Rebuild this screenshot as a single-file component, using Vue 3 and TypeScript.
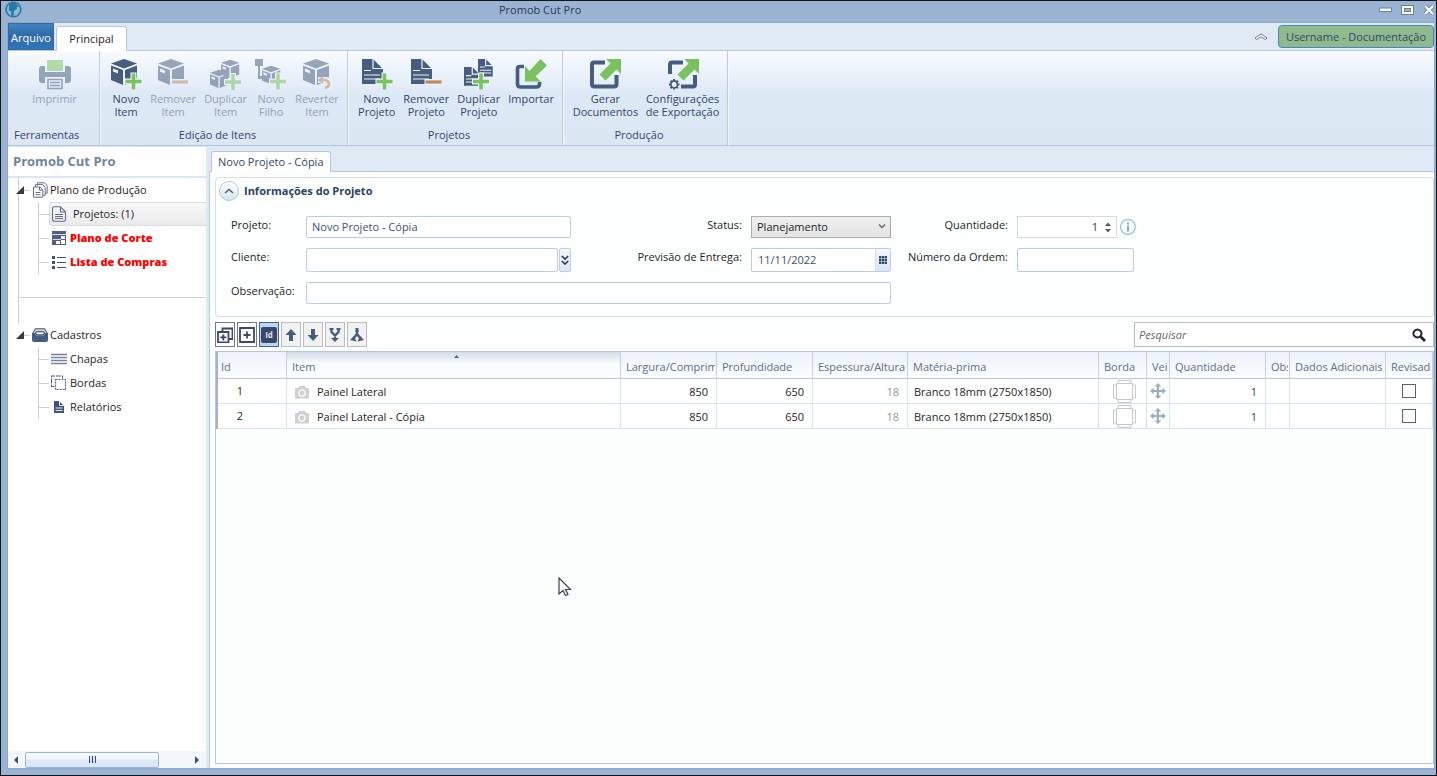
<script setup lang="ts">
import { h, ref } from 'vue'

interface Shape {
  d: string
  fill?: string
  stroke?: string
  w?: number
  dash?: string
}
interface RibbonButton {
  icon: string
  lines: string[]
  disabled?: boolean
}
interface RibbonGroup {
  name: string
  cls: string
  buttons: RibbonButton[]
}

const NAVY = '#465d7e'
const GREEN = '#79c25f'
const TAN = '#bf8a60'
const PALE = '#eef3fa'

const cube = (x: number, y: number, s: number): Shape[] => {
  const p = (a: number, b: number) => `${(x + a * s).toFixed(1)} ${(y + b * s).toFixed(1)}`
  return [
    {
      d: `M${p(13, 1)}L${p(26, 5.5)}L${p(13, 10.5)}L${p(0, 5.5)}ZM${p(0, 7.5)}L${p(12, 12)}V${(y + 27 * s).toFixed(1)}L${p(0, 22)}ZM${p(14, 12)}L${p(26, 7.5)}V${(y + 22 * s).toFixed(1)}L${p(14, 27)}Z`,
      fill: NAVY,
    },
    { d: `M${p(2, 10.5)}L${p(7, 12.5)}V${(y + 15.5 * s).toFixed(1)}L${p(2, 13.5)}Z`, fill: PALE },
  ]
}
const plus = (x: number, y: number): Shape[] => [
  { d: `M${x - 9} ${y}h18M${x} ${y - 9}v18`, stroke: PALE, w: 6 },
  { d: `M${x - 8} ${y}h16M${x} ${y - 8}v16`, stroke: GREEN, w: 3.6 },
]
const minus = (x: number, y: number): Shape[] => [
  { d: `M${x - 9} ${y}h18`, stroke: PALE, w: 6 },
  { d: `M${x - 8} ${y}h16`, stroke: TAN, w: 3.2 },
]
const page = (x: number, y: number, s: number): Shape[] => [
  { d: `M${x} ${y}h${11 * s}l${10 * s} ${10 * s}v${15 * s}h${-21 * s}z`, fill: NAVY },
  { d: `M${x + 11 * s} ${y}v${9.5 * s}h${10 * s}`, stroke: PALE, w: 1.2 },
  {
    d: `M${x + 2} ${y + 11.5 * s}h${7 * s}M${x + 2} ${y + 16 * s}h${16 * s}M${x + 2} ${y + 20 * s}h${16 * s}`,
    stroke: PALE,
    w: 1.1,
  },
]
const outArrow: Shape = { d: 'M17 1h15v15l-4.5-4.5L16.5 22.5l-6-6L21.5 5.5z', fill: GREEN }

const icons: Record<string, Shape[]> = {
  print: [
    { d: 'M8 2h16v11H8z', fill: GREEN },
    { d: 'M3 8h3v6h20V8h3q3 0 3 3v11q0 3-3 3h-3v-6H6v6H3q-3 0-3-3V11q0-3 3-3z', fill: NAVY },
    { d: 'M9 21.5h14v9H9zM11 24.5h10M11 27.5h10', stroke: NAVY, w: 1.5 },
  ],
  itemNew: [...cube(1, 0, 1), ...plus(23.5, 23.5)],
  itemRemove: [...cube(1, 0, 1), ...minus(23, 24)],
  itemDuplicate: [...cube(11, 1, 0.7), ...cube(0, 11, 0.7), ...plus(23, 24)],
  itemChild: [
    { d: 'M0 1h8v7H0zM3 8h2v10h4v3H3z', fill: NAVY },
    ...cube(7, 7, 0.7),
    ...plus(23, 23.5),
  ],
  itemRevert: [
    ...cube(2, 0, 1),
    { d: 'M17 22h7q5 0 5 4t-4 5', stroke: PALE, w: 6 },
    { d: 'M20 22h4q4 1 4 4t-4 4', stroke: TAN, w: 2.8 },
    { d: 'M16 22l6-4v8z', fill: TAN },
  ],
  projectNew: [...page(1, 1, 1), ...plus(23.5, 23.5)],
  projectRemove: [...page(1, 1, 1), ...minus(23.5, 24)],
  projectDuplicate: [...page(15, 1, 0.7), ...page(1, 9, 0.75), ...plus(18, 23.5)],
  import: [
    { d: 'M9 8.5H5q-2.5 0-2.5 2.5v15q0 3 3 3h16q3 0 3-3v-2', stroke: NAVY, w: 3.6 },
    { d: 'M10 8l4.5 5L25.5 1l6.5 6.5L20.5 18.5l5.5 5H10z', fill: GREEN },
  ],
  generate: [
    { d: 'M16 4.5H5q-2 0-2 2v19.5q0 2.5 2.5 2.5H25q2.5 0 2.5-2.5V17', stroke: NAVY, w: 4 },
    outArrow,
  ],
  exportConfig: [
    { d: 'M16 4.5H5q-2 0-2 2V16M14 28.5h12q2 0 2-2V17', stroke: NAVY, w: 4 },
    outArrow,
    { d: 'M7 21v10.5M2 26.5h10.5M3.5 22.7l7.5 7.5M3.5 30.2l7.5-7.5', stroke: NAVY, w: 2 },
    { d: 'M7.2 23a3.4 3.4 0 1 1-.1 0z', fill: PALE, stroke: NAVY, w: 1.8 },
  ],
  stack: [
    { d: 'M5.5 3.5V.8h7l2.7 3v7.4h-2M3.5 5V2.6h7l2.7 3v7.7h-2', stroke: '#61708f', w: 1 },
    { d: 'M1.5 5h6.3l3 3v7.2H1.500zM7.5 5v3.2h3M3.5 10.5h5M3.5 12.7h5', stroke: '#61708f', w: 1, fill: '#fff' },
  ],
  sheet: [
    { d: 'M3 .8h6.5L14.5 6v7.5q0 1.700-1.700 1.700H3.500q-2 0-2-2V2.500Q1.500.8 3 .8zM9.500 1v5h5M4 8.500h8M4 10.500h8M4 12.500h8', stroke: '#61708f', w: 1.1 },
  ],
  cutPlan: [
    { d: 'M1 1h14v14H1z', fill: '#50607d' },
    { d: 'M1 4.500h14', stroke: '#d7dce6', w: 1 },
    { d: 'M2 9.500h8', stroke: '#d7dce6', w: 1 },
    { d: 'M10 6h4v3h-4zM5 11h4v3H5zM10 10h4v4h-4z', fill: '#fff' },
  ],
  list: [
    { d: 'M1 2h3v3H1zM1 7h3v3H1zM1 12h3v3H1z', fill: '#3f5272' },
    { d: 'M6 3.500h9M6 8.500h9M6 13.500h9', stroke: '#3f5272', w: 1.2 },
  ],
  tray: [
    { d: 'M0 6h3l1 2.500h8L13 6h3v7q0 2-2 2H2q-2 0-2-2z', fill: NAVY },
    { d: 'M1 6l2.500-4.200h9L15 6M3 6.500l2-2h6l2 2-2 1.500H5z', stroke: NAVY, w: 1.3 },
  ],
  boards: [{ d: 'M0 3.500h16M0 6.500h16M0 9.500h16M0 12.500h16', stroke: '#7586a4', w: 1.4 }],
  edges: [
    { d: 'M3.500 11.500h-3V1h11v2.500', stroke: '#50607d', w: 1.1, dash: '5 1' },
    { d: 'M4.500 4.500h10v10h-10z', stroke: '#50607d', w: 1.2, dash: '2 1' },
  ],
  report: [
    { d: 'M3 2h5l5 5v7H3z', fill: '#3c5377' },
    { d: 'M8.500 2v4.500H13M4.500 9h7M4.500 11.500h7', stroke: '#e8edf5', w: 1 },
  ],
  expandAll: [
    { d: 'M5.500 5V1.500h10V12H12', stroke: '#3b4a68', w: 1.8 },
    { d: 'M1 5h10.500v10.500H1zM6.300 7.500v6M3.300 10.400h6', stroke: '#3b4a68', w: 1.8 },
  ],
  addBox: [{ d: 'M1 1h14v14H1zM8 4.500v7M4.500 8h7', stroke: '#3b4a68', w: 1.8 }],
  up: [{ d: 'M8 2l5.500 6H10v6H6V8H2.500z', fill: NAVY }],
  down: [{ d: 'M8 14l5.500-6H10V2H6v6H2.500z', fill: NAVY }],
  merge: [
    { d: 'M4.500 2v3L8 8.500 11.500 5V2M8 8v4', stroke: NAVY, w: 2.4 },
    { d: 'M2.500 1h4v2h-4zM9.500 1h4v2h-4zM4 11h8l-4 4z', fill: NAVY },
  ],
  split: [
    { d: 'M8 3v4l-4 5M8 7l4 5', stroke: NAVY, w: 2.4 },
    { d: 'M6.500 1h3v4h-3zM1 13l4-4 2.500 5.500zM15 13l-4-4-2.500 5.500z', fill: NAVY },
  ],
  camera: [
    { d: 'M1 4q0-1 1-1h2l1.200-2h5.600L12 3h2q1 0 1 1v8.500q0 1-1 1H2q-1 0-1-1z', fill: '#d0d0d0' },
    { d: 'M8 4.800a3.200 3.200 0 1 1-.1 0z', stroke: '#fff', w: 1.3 },
  ],
  banding: [
    { d: 'M5 .5h13v3H5zM5 19.500h13v3H5zM.5 5h3v13h-3zM19.500 5h3v13h-3zM3.500 3.500h16v16h-16z', stroke: '#c6c9c9', w: 1 },
  ],
  move: [
    { d: 'M8 2v12M2 8h12', stroke: '#9badc5', w: 2 },
    { d: 'M8 0l3.300 3.600H4.700zM8 16l3.300-3.600H4.700zM0 8l3.600-3.300v6.600zM16 8l-3.600-3.300v6.600z', fill: '#9badc5' },
  ],
  search: [
    { d: 'M5.500 1.500a4 4 0 1 1-.1 0z', stroke: '#2b2633', w: 2 },
    { d: 'M8.500 8.500l4.500 4.500', stroke: '#2b2633', w: 2.8 },
  ],
  info: [
    { d: 'M8 .7a7.300 7.300 0 1 1-.1 0z', stroke: '#8cc4ea', w: 1.2 },
    { d: 'M7 6.500h2v6H7zM7 3.500h2v2H7z', fill: '#6fb3e6' },
  ],
  calendar: [
    { d: 'M0 0h8v8H0z', fill: '#34496c' },
    { d: 'M0 2.500h8M0 5.500h8M2.500 0v8M5.500 0v8', stroke: '#c9d7ea', w: 0.6 },
  ],
  chevrons: [{ d: 'M.8 1l3.200 3 3.200-3M.8 6l3.200 3 3.200-3', stroke: '#2d3b52', w: 1.7 }],
  chevronUp: [{ d: 'M1 6l4-3.500L9 6', stroke: '#50607d', w: 1.6 }],
  chevronDown: [{ d: 'M1 2.500l3 3 3-3', stroke: '#666b75', w: 1.5 }],
  caretUp: [{ d: 'M0 4l3-3.500L6 4z', fill: '#55596a' }],
  caretDown: [{ d: 'M0 0l3 3.500L6 0z', fill: '#55596a' }],
  sorted: [{ d: 'M0 3l2.500-3L5 3z', fill: '#4a6285' }],
  collapse: [{ d: 'M1 5l6-4 6 4-1.500 1.500L7 3.800 2.500 6.500z', fill: '#fff', stroke: '#777c88', w: 1 }],
  minimize: [{ d: 'M.5 1h12v3.500H.5z', fill: '#fff', stroke: '#6e7f98', w: 1 }],
  maximize: [{ d: 'M2 2h9v6H2z', stroke: '#6e7f98', w: 4 }, { d: 'M2 2h9v6H2z', stroke: '#fff', w: 2 }],
  close: [{ d: 'M2 1l8 8M10 1l-8 8', stroke: '#6e7f98', w: 4 }, { d: 'M2 1l8 8M10 1l-8 8', stroke: '#fff', w: 2.4 }],
  left: [{ d: 'M4 0v8L0 4z', fill: '#3d5274' }],
  right: [{ d: 'M0 0v8l4-4z', fill: '#3d5274' }],
  grip: [{ d: 'M.5 0v7M3.500 0v7M6.500 0v7', stroke: '#3d5274', w: 1.2 }],
  opened: [{ d: 'M8 0v8H0z', fill: '#3a3a3a' }],
  logo: [
    { d: 'M8.500 1.200a7.300 7.300 0 1 1-.1 0z', fill: '#8db6d4', stroke: '#2878a8', w: 1.6 },
    { d: 'M4 3.500q3-2.500 6.500-1.500L14 5.500l-2.500 1 .5 1.500-3 1.500-.5 6q-2-.2-2.500-2l.5-3-2.500-1z', fill: '#2878a8' },
  ],
  pointer: [{ d: 'M1 1v16l4-3.500 2.500 5 2.500-1-2.500-5h5z', fill: '#fff', stroke: '#3b3f55', w: 1.2 }],
}

const Icon = (props: { name: string; w: number; h: number }) =>
  h(
    'svg',
    { width: props.w, height: props.h, viewBox: `0 0 ${props.w} ${props.h}`, 'aria-hidden': 'true' },
    icons[props.name].map((s) =>
      h('path', {
        d: s.d,
        fill: s.fill ?? 'none',
        stroke: s.stroke ?? 'none',
        'stroke-width': s.w ?? 0,
        'stroke-dasharray': s.dash,
      }),
    ),
  )
Icon.props = ['name', 'w', 'h']

const groups: RibbonGroup[] = [
  { name: 'Ferramentas', cls: 'g-tools', buttons: [{ icon: 'print', lines: ['Imprimir'], disabled: true }] },
  {
    name: 'Edição de Itens',
    cls: 'g-items',
    buttons: [
      { icon: 'itemNew', lines: ['Novo', 'Item'] },
      { icon: 'itemRemove', lines: ['Remover', 'Item'], disabled: true },
      { icon: 'itemDuplicate', lines: ['Duplicar', 'Item'], disabled: true },
      { icon: 'itemChild', lines: ['Novo', 'Filho'], disabled: true },
      { icon: 'itemRevert', lines: ['Reverter', 'Item'], disabled: true },
    ],
  },
  {
    name: 'Projetos',
    cls: 'g-projects',
    buttons: [
      { icon: 'projectNew', lines: ['Novo', 'Projeto'] },
      { icon: 'projectRemove', lines: ['Remover', 'Projeto'] },
      { icon: 'projectDuplicate', lines: ['Duplicar', 'Projeto'] },
      { icon: 'import', lines: ['Importar'] },
    ],
  },
  {
    name: 'Produção',
    cls: 'g-production',
    buttons: [
      { icon: 'generate', lines: ['Gerar', 'Documentos'] },
      { icon: 'exportConfig', lines: ['Configurações', 'de Exportação'] },
    ],
  },
]

const tree = [
  {
    label: 'Plano de Produção',
    icon: 'stack',
    children: [
      { label: 'Projetos: (1)', icon: 'sheet', cls: 'selected' },
      { label: 'Plano de Corte', icon: 'cutPlan', cls: 'alert' },
      { label: 'Lista de Compras', icon: 'list', cls: 'alert' },
    ],
  },
  {
    label: 'Cadastros',
    icon: 'tray',
    children: [
      { label: 'Chapas', icon: 'boards', cls: '' },
      { label: 'Bordas', icon: 'edges', cls: '' },
      { label: 'Relatórios', icon: 'report', cls: '' },
    ],
  },
]

const tools = [
  { icon: 'expandAll', title: 'Expandir todos', cls: 'outlined' },
  { icon: 'addBox', title: 'Adicionar', cls: 'outlined' },
  { icon: '', title: 'Id', cls: 'active' },
  { icon: 'up', title: 'Mover para cima', cls: '' },
  { icon: 'down', title: 'Mover para baixo', cls: '' },
  { icon: 'merge', title: 'Agrupar', cls: '' },
  { icon: 'split', title: 'Separar', cls: '' },
]

const columns = [
  { label: 'Id', cls: 'c-id' },
  { label: 'Item', cls: 'c-item' },
  { label: 'Largura/Comprimento', cls: 'c-wide' },
  { label: 'Profundidade', cls: 'c-wide' },
  { label: 'Espessura/Altura', cls: 'c-thick' },
  { label: 'Matéria-prima', cls: 'c-material' },
  { label: 'Borda', cls: 'c-edge' },
  { label: 'Veio', cls: 'c-grain' },
  { label: 'Quantidade', cls: 'c-wide' },
  { label: 'Obs', cls: 'c-note' },
  { label: 'Dados Adicionais', cls: 'c-wide' },
  { label: 'Revisado', cls: 'c-check' },
]

const rows = ref([
  { id: 1, item: 'Painel Lateral', w: 850, d: 650, t: 18, material: 'Branco 18mm (2750x1850)', qty: 1, checked: false },
  { id: 2, item: 'Painel Lateral - Cópia', w: 850, d: 650, t: 18, material: 'Branco 18mm (2750x1850)', qty: 1, checked: false },
])

const project = ref('Novo Projeto - Cópia')
const client = ref('')
const note = ref('')
const status = ref('Planejamento')
const due = ref('11/11/2022')
const quantity = ref('1')
const order = ref('')
const query = ref('')
</script>

<template>
  <div class="window">
    <header class="titlebar">
      <Icon name="logo" :w="17" :h="17" />
      <h1>Promob Cut Pro</h1>
      <div class="window-buttons">
        <button type="button" aria-label="Minimizar"><Icon name="minimize" :w="13" :h="6" /></button>
        <button type="button" aria-label="Maximizar"><Icon name="maximize" :w="13" :h="10" /></button>
        <button type="button" aria-label="Fechar"><Icon name="close" :w="12" :h="10" /></button>
      </div>
    </header>

    <div class="frame">
      <nav class="ribbon-tabs">
        <button type="button" class="file-tab">Arquivo</button>
        <button type="button" class="main-tab">Principal</button>
        <button type="button" class="collapse" aria-label="Recolher faixa"><Icon name="collapse" :w="14" :h="8" /></button>
        <button type="button" class="user">Username - Documentação</button>
      </nav>

      <div class="ribbon">
        <section v-for="g in groups" :key="g.name" :class="['group', g.cls]">
          <div class="group-buttons">
            <button v-for="b in g.buttons" :key="b.icon" type="button" :disabled="b.disabled">
              <Icon :name="b.icon" :w="32" :h="32" />
              <span v-for="l in b.lines" :key="l">{{ l }}</span>
            </button>
          </div>
          <h2>{{ g.name }}</h2>
        </section>
      </div>

      <div class="body">
        <aside class="sidebar">
          <h2>Promob Cut Pro</h2>
          <ul class="tree">
            <li v-for="n in tree" :key="n.label" class="branch">
              <a href="#" class="node">
                <Icon name="opened" :w="8" :h="8" />
                <i class="dash"></i>
                <Icon :name="n.icon" :w="16" :h="16" />
                <span>{{ n.label }}</span>
              </a>
              <ul>
                <li v-for="c in n.children" :key="c.label">
                  <i class="dash"></i>
                  <a href="#" :class="['leaf', c.cls]">
                    <Icon :name="c.icon" :w="16" :h="16" />
                    <span>{{ c.label }}</span>
                  </a>
                </li>
              </ul>
            </li>
          </ul>
          <div class="scrollbar">
            <button type="button" aria-label="Rolar para a esquerda"><Icon name="left" :w="4" :h="8" /></button>
            <div class="track"><div class="thumb"><Icon name="grip" :w="7" :h="7" /></div></div>
            <button type="button" aria-label="Rolar para a direita"><Icon name="right" :w="4" :h="8" /></button>
          </div>
        </aside>

        <main class="main">
          <div class="doc-tabs"><button type="button">Novo Projeto - Cópia</button></div>
          <div class="doc">
            <section class="info">
              <div class="info-head">
                <button type="button" aria-label="Recolher"><Icon name="chevronUp" :w="10" :h="8" /></button>
                <h2>Informações do Projeto</h2>
              </div>
              <form class="form" @submit.prevent>
                <label for="project">Projeto:</label>
                <input id="project" v-model="project" class="box" type="text" />
                <label for="status" class="end">Status:</label>
                <div class="select">
                  <select id="status" v-model="status"><option>Planejamento</option></select>
                  <Icon name="chevronDown" :w="8" :h="8" />
                </div>
                <label for="quantity" class="end">Quantidade:</label>
                <div class="quantity">
                  <div class="spin">
                    <input id="quantity" v-model="quantity" type="text" />
                    <div class="arrows">
                      <button type="button" aria-label="Aumentar"><Icon name="caretUp" :w="6" :h="4" /></button>
                      <button type="button" aria-label="Diminuir"><Icon name="caretDown" :w="6" :h="4" /></button>
                    </div>
                  </div>
                  <Icon name="info" :w="16" :h="16" />
                </div>

                <label for="client">Cliente:</label>
                <div class="client">
                  <input id="client" v-model="client" class="box" type="text" />
                  <button type="button" aria-label="Escolher cliente"><Icon name="chevrons" :w="8" :h="10" /></button>
                </div>
                <label for="due" class="end">Previsão de Entrega:</label>
                <div class="box date">
                  <input id="due" v-model="due" type="text" />
                  <button type="button" aria-label="Abrir calendário"><Icon name="calendar" :w="8" :h="8" /></button>
                </div>
                <label for="order" class="end">Número da Ordem:</label>
                <input id="order" v-model="order" class="box order" type="text" />

                <label for="note">Observação:</label>
                <input id="note" v-model="note" class="box note" type="text" />
              </form>
            </section>

            <div class="toolbar">
              <button v-for="t in tools" :key="t.title" type="button" :class="t.cls" :aria-label="t.title">
                <Icon v-if="t.icon" :name="t.icon" :w="16" :h="16" />
                <b v-else>Id</b>
              </button>
              <div class="search">
                <input v-model="query" type="search" placeholder="Pesquisar" aria-label="Pesquisar" />
                <button type="button" aria-label="Buscar"><Icon name="search" :w="14" :h="14" /></button>
              </div>
            </div>

            <div class="grid">
              <table>
                <colgroup><col v-for="c in columns" :key="c.label" :class="c.cls" /></colgroup>
                <thead>
                  <tr>
                    <th v-for="c in columns" :key="c.label" :class="{ sorted: c.label === 'Item' }">
                      <Icon v-if="c.label === 'Item'" name="sorted" :w="5" :h="3" />
                      <div>{{ c.label }}</div>
                    </th>
                  </tr>
                </thead>
                <tbody>
                  <tr v-for="r in rows" :key="r.id">
                    <td class="id">{{ r.id }}</td>
                    <td><div class="item"><Icon name="camera" :w="16" :h="14" /><span>{{ r.item }}</span></div></td>
                    <td class="num">{{ r.w }}</td>
                    <td class="num">{{ r.d }}</td>
                    <td class="num muted">{{ r.t }}</td>
                    <td>{{ r.material }}</td>
                    <td class="pic edge"><Icon name="banding" :w="23" :h="23" /></td>
                    <td class="pic"><Icon name="move" :w="16" :h="16" /></td>
                    <td class="num blue">{{ r.qty }}</td>
                    <td></td>
                    <td></td>
                    <td class="pic"><input v-model="r.checked" type="checkbox" :aria-label="'Revisado ' + r.id" /></td>
                  </tr>
                </tbody>
              </table>
            </div>
          </div>
        </main>
      </div>
    </div>
    <Icon class="pointer" name="pointer" :w="14" :h="20" />
  </div>
</template>

<style>
html,
body {
  margin: 0;
}
</style>

<style scoped>
* {
  box-sizing: border-box;
}
.window {
  position: relative;
  display: flex;
  flex-direction: column;
  min-height: 100vh;
  padding: 0 1px 6px 6px;
  border: 1px solid #11151c;
  background: #9ab3d2;
  color: #1e1e1e;
  font: 11px/16px "Open Sans", "Noto Sans", sans-serif;
}
button,
input,
select {
  margin: 0;
  padding: 0;
  border: 0;
  background: none;
  color: inherit;
  font: inherit;
}
h1,
h2 {
  margin: 0;
  font-size: 11px;
  font-weight: 400;
}
ul {
  margin: 0;
  padding: 0;
  list-style: none;
}
a {
  color: inherit;
  text-decoration: none;
}
svg {
  display: block;
  flex: none;
}
.titlebar {
  display: flex;
  align-items: center;
  height: 21px;
  margin-left: -2px;
}
.titlebar h1 {
  flex: 1;
  padding: 0 0 3px 477px;
  color: #2b3a55;
}
.titlebar > svg {
  margin-bottom: 4px;
}
.window-buttons {
  display: flex;
  align-items: center;
  gap: 9px;
  padding-bottom: 3px;
}
.frame {
  display: flex;
  flex: 1;
  flex-direction: column;
  border: 1px solid #8fa9ca;
  background: #dfe9f4;
}
.ribbon-tabs {
  display: flex;
  align-items: flex-end;
  height: 28px;
  border-bottom: 1px solid #b7c8de;
}
.file-tab {
  width: 46px;
  height: 27px;
  padding-top: 3px;
  border: 1px solid #2f69a8;
  background: linear-gradient(#4583bd, #2d6aab 45%, #2f74b8);
  color: #fff;
  white-space: nowrap;
}
.main-tab {
  width: 71px;
  height: 25px;
  margin: 0 auto -1px 2px;
  border: 1px solid #b7c8de;
  border-bottom-color: #fff;
  border-radius: 3px 3px 0 0;
  background: #fff;
}
.collapse {
  align-self: center;
  margin-right: 10px;
}
.user {
  width: 156px;
  height: 23px;
  margin-bottom: 2px;
  border: 1px solid #4e86ba;
  border-radius: 4px;
  background: #8fba8d;
  color: #34466a;
}
.ribbon {
  display: flex;
  height: 95px;
  border-bottom: 1px solid #b0c3dc;
  background: linear-gradient(#f8fbff, #dee9f6 45%, #dce7f4);
}
.group {
  display: flex;
  flex-direction: column;
  border-right: 1px solid #bccbdf;
  box-shadow: 1px 0 #f5f9fd;
  color: #31466a;
  text-align: center;
}
.g-tools {
  width: 92px;
}
.g-items {
  width: 248px;
}
.g-projects {
  width: 215px;
}
.g-production {
  width: 165px;
}
.group-buttons {
  display: flex;
  flex: 1;
  justify-content: space-evenly;
  padding-left: 2px;
}
.group-buttons button {
  display: flex;
  flex-direction: column;
  align-items: center;
  padding-top: 7px;
  line-height: 13px;
}
.group-buttons svg {
  margin-bottom: 2px;
}
.group-buttons button:disabled {
  color: #94a2b5;
}
.group-buttons button:disabled svg {
  opacity: 0.52;
}
.group h2 {
  height: 18px;
  padding-right: 12px;
}
.g-tools h2 {
  padding-left: 6px;
  text-align: left;
}
.body {
  display: flex;
  flex: 1;
  padding-top: 1px;
}
.sidebar {
  display: flex;
  flex-direction: column;
  width: 198px;
  background: #fff;
}
.sidebar > h2 {
  height: 31px;
  padding-left: 5px;
  border-bottom: 2px solid #d9e5f5;
  color: #71839e;
  font-size: 13px;
  font-weight: 700;
  line-height: 29px;
}
.tree {
  flex: 1;
}
.branch:first-child {
  height: 120px;
  margin-left: 10px;
  border-bottom: 1px solid #cfcfcf;
  border-left: 1px solid #cfcfcf;
}
.branch:last-child {
  margin-left: 10px;
  border-left: 1px solid transparent;
}
.branch:last-child::before {
  display: block;
  height: 25px;
  margin-left: -1px;
  border-left: 1px solid #cfcfcf;
  content: "";
}
.node {
  display: flex;
  align-items: center;
  height: 24px;
  margin-left: -3px;
}
.node > .dash {
  width: 6px;
  margin-right: 2px;
}
.node span {
  margin-left: 2px;
}
.dash {
  flex: none;
  width: 10px;
  border-top: 1px solid #cfcfcf;
}
.branch ul {
  margin-left: 19px;
  border-left: 1px solid #cfcfcf;
}
.branch ul li {
  display: flex;
  align-items: center;
  height: 24px;
}
.leaf {
  display: flex;
  flex: 1;
  align-items: center;
  height: 24px;
  padding-left: 2px;
}
.leaf span {
  margin-left: 3px;
}
.leaf.selected {
  border: 1px solid #dcdcdc;
  border-right: 0;
  border-radius: 3px 0 0 3px;
  background: linear-gradient(#f8f8f8, #eaeaea);
  padding-left: 1px;
}
.leaf.selected span {
  margin-left: 6px;
}
.leaf.alert {
  color: #f00;
  font-weight: 800;
}
.scrollbar {
  display: flex;
  align-items: center;
  height: 17px;
  padding: 0 7px 0 6px;
  background: #f3f6fb;
}
.track {
  flex: 1;
  padding: 0 36px 0 7px;
}
.thumb {
  display: flex;
  align-items: center;
  justify-content: center;
  height: 16px;
  border: 1px solid #9fb3cf;
  border-radius: 2px;
  background: linear-gradient(#f7faff, #eef4fd 45%, #dbe7f6 50%, #dbe7f6);
}
.main {
  display: flex;
  flex: 1;
  flex-direction: column;
  min-width: 0;
  margin-left: 3px;
}
.doc-tabs {
  height: 24px;
  padding: 4px 0 0 2px;
}
.doc-tabs button {
  position: relative;
  height: 21px;
  padding: 0 6px;
  border: 1px solid #b7c8de;
  border-bottom: 0;
  border-radius: 3px 3px 0 0;
  background: #fff;
  color: #31466a;
}
.doc {
  display: flex;
  flex: 1;
  flex-direction: column;
  padding: 5px 0 4px 5px;
  border: solid #b7c8de;
  border-width: 1px 0 0 1px;
  background: #fdfefe;
}
.info {
  padding-bottom: 12px;
  border: 1px solid #dcdddd;
  border-radius: 4px;
}
.info-head {
  display: flex;
  align-items: center;
  gap: 5px;
  height: 26px;
  padding-left: 3px;
}
.info-head button {
  display: flex;
  align-items: center;
  justify-content: center;
  width: 20px;
  height: 20px;
  border: 1px solid #b4c6dd;
  border-radius: 50%;
  background: linear-gradient(#fff, #d8e4f3);
}
.info-head h2 {
  color: #2c4264;
  font-weight: 700;
}
.form {
  display: grid;
  grid-template-columns: 75px 265px 180px 140px 126px 120px;
  grid-template-rows: 22px 24px 22px;
  row-gap: 10px;
  padding: 12px 0 0 15px;
}
.form label {
  line-height: 18px;
  white-space: nowrap;
}
.form label.end {
  padding-right: 9px;
  text-align: right;
}
.box {
  min-width: 0;
  padding: 0 5px;
  border: 1px solid #bccde2;
  border-radius: 2px;
  background: #fff;
  color: #3c5273;
}
.note {
  grid-column: 2 / 5;
}
.order {
  width: 117px;
}
.client {
  display: flex;
}
.client input {
  flex: 1;
}
.client button,
.date button {
  display: flex;
  align-items: center;
  justify-content: center;
  background: linear-gradient(#f3f7fd, #d9e5f5);
}
.client button {
  width: 12px;
  margin-left: 1px;
  border: 1px solid #bccde2;
  border-radius: 2px;
}
.date {
  display: flex;
  padding: 0 0 0 6px;
}
.date input {
  flex: 1;
  min-width: 0;
}
.date button {
  width: 15px;
  border-left: 1px solid #cfdcec;
}
.select {
  position: relative;
}
.select select {
  width: 100%;
  height: 22px;
  padding-left: 5px;
  border: 1px solid #acacac;
  appearance: none;
  background: linear-gradient(#f0f0f0, #e3e3e3);
}
.select svg {
  position: absolute;
  top: 6px;
  right: 5px;
  pointer-events: none;
}
.quantity {
  display: flex;
  align-items: center;
  gap: 3px;
}
.spin {
  display: flex;
  width: 100px;
  height: 22px;
  border: 1px solid #d9d9d9;
  background: #fff;
}
.spin input {
  flex: 1;
  min-width: 0;
  padding-right: 7px;
  color: #3a3040;
  text-align: right;
}
.arrows {
  display: flex;
  flex-direction: column;
  justify-content: center;
  gap: 3px;
  padding-right: 5px;
}
.toolbar {
  display: flex;
  gap: 2px;
  height: 25px;
  margin: 5px 0 4px;
}
.toolbar > button {
  display: flex;
  align-items: center;
  justify-content: center;
  width: 20px;
  border: 1px solid #bdbdbd;
  background: #f1f1f1;
}
.toolbar > .outlined {
  border-color: #77788a;
  background: #fbfbfd;
}
.toolbar > .active {
  border-color: #3c62a0;
  background: #b9d6f2;
}
.toolbar b {
  width: 16px;
  height: 16px;
  border-radius: 2px;
  background: #3b4766;
  color: #dfe4ee;
  font-size: 8px;
  line-height: 15px;
}
.search {
  display: flex;
  align-items: center;
  width: 300px;
  margin-left: auto;
  padding: 0 7px 0 4px;
  border: 1px solid #b9bdc2;
  background: #fff;
}
.search input {
  flex: 1;
  outline: 0;
  appearance: none;
  font-style: italic;
}
.search input::placeholder {
  color: #666;
}
.grid {
  flex: 1;
  border: 1px solid #b7c6da;
  background: #fcfefe;
}
table {
  width: 100%;
  border-collapse: separate;
  border-spacing: 0;
  table-layout: fixed;
  border-left: 2px solid #a5b3c8;
}
.c-id {
  width: 69px;
}
.c-wide {
  width: 96px;
}
.c-thick {
  width: 95px;
}
.c-material {
  width: 191px;
}
.c-edge {
  width: 48px;
}
.c-grain {
  width: 23px;
}
.c-note {
  width: 24px;
}
.c-check {
  width: 47px;
}
th {
  position: relative;
  height: 27px;
  padding: 3px 1px 0 5px;
  border-right: 1px solid #c3d0e0;
  border-bottom: 1px solid #b9c8dc;
  background: linear-gradient(#edf2fb, #fbfdfe);
  color: #5c6f8c;
  font-weight: 400;
  text-align: left;
}
th:first-child {
  padding-left: 3px;
}
th div {
  overflow: hidden;
  white-space: nowrap;
}
th.sorted {
  background: linear-gradient(#d3dce9, #fafdfd 45%);
}
th svg {
  position: absolute;
  top: 3px;
  left: 50%;
}
td {
  height: 25px;
  padding: 1px 0 0 6px;
  border-right: 1px solid #d5e4f4;
  border-bottom: 1px solid #d5e4f4;
  background: #fff;
  white-space: nowrap;
}
td.id {
  padding: 0 24px 0 0;
  text-align: center;
}
td.num {
  padding-right: 8px;
  text-align: right;
}
td.muted {
  color: #969696;
}
td.blue {
  color: #2f3f60;
}
td.pic {
  padding: 0;
}
td.edge {
  padding-left: 3px;
}
td.pic svg,
td.pic input {
  margin: 0 auto;
}
.item {
  display: flex;
  align-items: center;
  gap: 7px;
  padding-left: 1px;
}
td input {
  display: block;
  width: 14px;
  height: 14px;
  border: 1px solid #5b6078;
  appearance: none;
  background: #fff;
}
.pointer {
  position: absolute;
  top: 576px;
  left: 557px;
}
</style>
